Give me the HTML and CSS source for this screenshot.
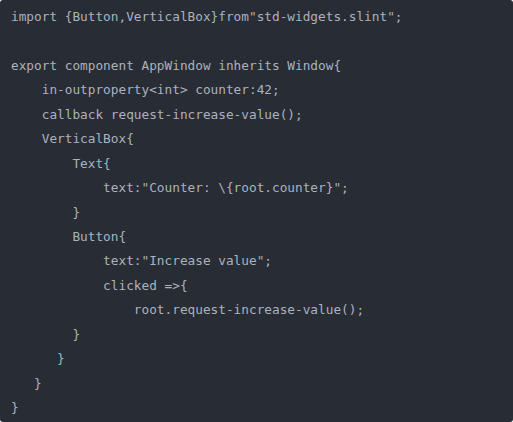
FILE: index.html
```html
<!DOCTYPE html>
<html>
<head>
<meta charset="utf-8">
<link rel="stylesheet" href="styles.css">
</head>
<body>
<div class="block"><pre class="code">import {Button,VerticalBox}from"std-widgets.slint";

export component AppWindow inherits Window{
    in-outproperty&lt;int&gt; counter:42;
    callback request-increase-value();
    VerticalBox{
        Text{
            text:"Counter: \{root.counter}";
        }
        Button{
            text:"Increase value";
            clicked =&gt;{
                root.request-increase-value();
        }
      }
   }
}</pre></div>
</body>
</html>
```
FILE: styles.css
```css
html, body {
  margin: 0;
  padding: 0;
  background: #ffffff;
}
.block {
  width: 513px;
  height: 422px;
  background: #282c34;
  border-radius: 3px;
  overflow: hidden;
  box-sizing: border-box;
  padding: 5px 11px 0;
}
.code {
  margin: 0;
  font-family: "DejaVu Sans Mono", monospace;
  font-size: 12.75px;
  line-height: 24.44px;
  color: #abb2bf;
  white-space: pre;
}
```
